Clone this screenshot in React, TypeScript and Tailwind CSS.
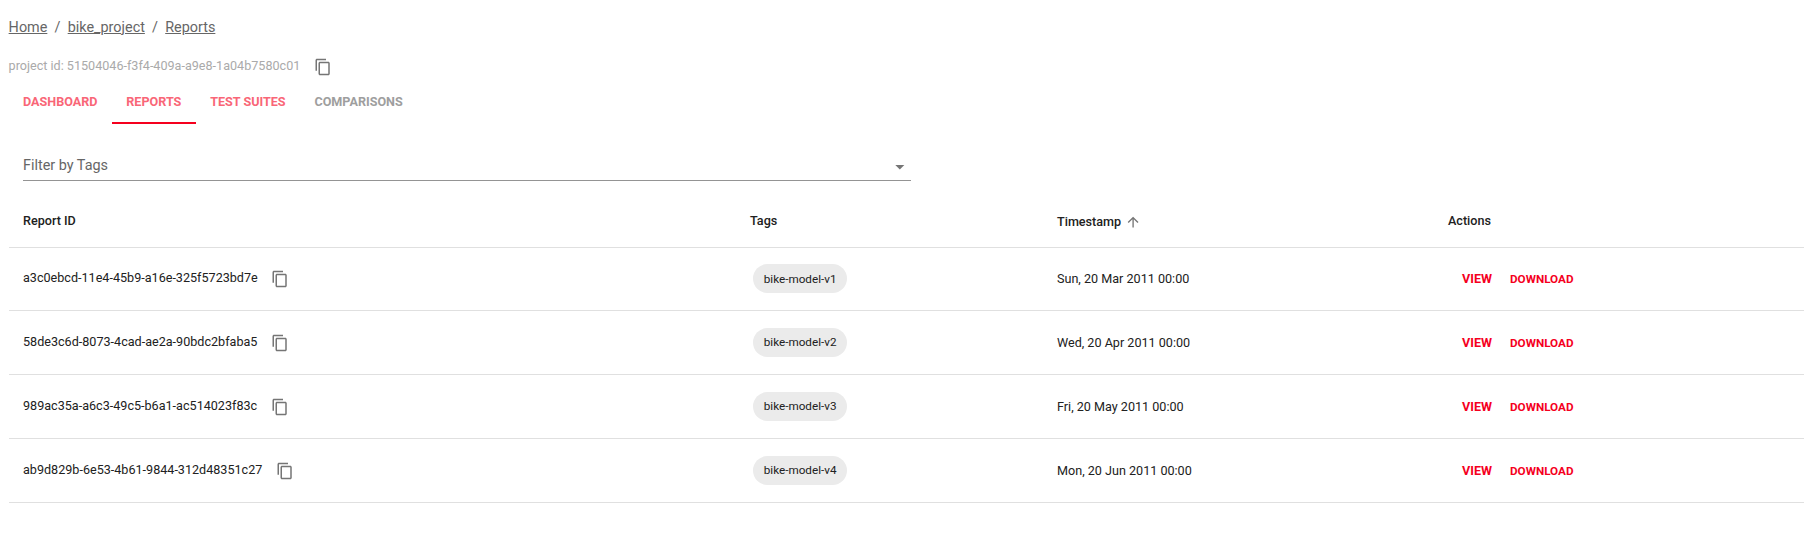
import React from "react";

type Report = { id: string; tag: string; timestamp: string };

const reports: Report[] = [
  { id: "a3c0ebcd-11e4-45b9-a16e-325f5723bd7e", tag: "bike-model-v1", timestamp: "Sun, 20 Mar 2011 00:00" },
  { id: "58de3c6d-8073-4cad-ae2a-90bdc2bfaba5", tag: "bike-model-v2", timestamp: "Wed, 20 Apr 2011 00:00" },
  { id: "989ac35a-a6c3-49c5-b6a1-ac514023f83c", tag: "bike-model-v3", timestamp: "Fri, 20 May 2011 00:00" },
  { id: "ab9d829b-6e53-4b61-9844-312d48351c27", tag: "bike-model-v4", timestamp: "Mon, 20 Jun 2011 00:00" },
];

const columns = "grid grid-cols-[727px_307px_391px_1fr] border-b border-[#e0e0e0]";

function CopyButton() {
  return (
    <button aria-label="Copy" className="flex shrink-0">
      <svg viewBox="0 0 24 24" className="size-[18px] fill-[#757575]">
        <path d="M16 1H4c-1.1 0-2 .9-2 2v14h2V3h12V1zm3 4H8c-1.1 0-2 .9-2 2v14c0 1.1.9 2 2 2h11c1.1 0 2-.9 2-2V7c0-1.1-.9-2-2-2zm0 16H8V7h11v14z" />
      </svg>
    </button>
  );
}

function Breadcrumbs() {
  return (
    <nav className="-ml-[0.4px] flex h-[53px] items-center gap-[7.2px] pt-[2px] text-[14.4px] text-[#666]">
      <a className="underline decoration-[#666]">Home</a>
      <span>/</span>
      <a className="underline decoration-[#666]">bike_project</a>
      <span>/</span>
      <a className="underline decoration-[#666]">Reports</a>
    </nav>
  );
}

function Tabs() {
  const tab = "flex items-center px-[14.4px] border-b-2";
  return (
    <div className="-ml-[0.4px] flex h-[43px] text-[12.6px] font-bold">
      <a className={`${tab} border-transparent text-[#f96677]`}>DASHBOARD</a>
      <a className={`${tab} border-[#f5001e] text-[#f96677]`}>REPORTS</a>
      <a className={`${tab} border-transparent text-[#f96677]`}>TEST SUITES</a>
      <a className={`${tab} border-transparent text-[#9e9e9e]`}>COMPARISONS</a>
    </div>
  );
}

function HeaderRow() {
  return (
    <div className={`${columns} mt-[13px] h-[54px] items-center font-medium`}>
      <div className="pl-[14px] pt-px">Report ID</div>
      <div className="pl-[14px] pt-px">Tags</div>
      <div className="flex items-center pl-[14px] pt-[3px]">
        Timestamp
        <svg viewBox="0 0 24 24" className="ml-1 size-[16.2px] fill-[#757575]">
          <path d="M4 12l1.41 1.41L11 7.83V20h2V7.83l5.58 5.59L20 12l-8-8-8 8z" />
        </svg>
      </div>
      <div className="pl-[14px] pt-px">Actions</div>
    </div>
  );
}

function ReportRow({ report }: { report: Report }) {
  return (
    <div className={`${columns} h-16 items-center first-of-type:h-[63px]`}>
      <div className="flex items-center gap-[13.6px] pl-[14px]">
        <span className="pb-[2px]">{report.id}</span>
        <CopyButton />
      </div>
      <div className="flex pb-px pl-[17px]">
        <span className="flex h-[29px] items-center rounded-full bg-[#ebebeb] px-[10.8px] text-[11.7px]">
          {report.tag}
        </span>
      </div>
      <div className="pl-[14px]">{report.timestamp}</div>
      <div className="flex items-center gap-[18px] pl-[28px] font-bold text-[#f5001e]">
        <a className="text-[12.6px]">VIEW</a>
        <a className="text-[11.7px]">DOWNLOAD</a>
      </div>
    </div>
  );
}

export default function App() {
  return (
    <main className="h-[560px] overflow-hidden bg-white pl-[9px] font-[Roboto,sans-serif] text-[12.6px] leading-[18px] text-[#212121]">
      <Breadcrumbs />
      <div className="-ml-[0.4px] flex h-[28px] items-center gap-[14px] pb-px text-[#aaa]">
        <span className="pb-[2px]">project id: 51504046-f3f4-409a-a9e8-1a04b7580c01</span>
        <CopyButton />
      </div>
      <Tabs />
      <div className="ml-[14px] mt-[26px] flex h-[31px] w-[888px] items-center justify-between border-b border-[#949494] pt-[2px] text-[14.4px] text-[#666]">
        <span>Filter by Tags</span>
        <svg viewBox="0 0 24 24" className="mt-px size-[21.6px] fill-[#757575]">
          <path d="M7 10l5 5 5-5z" />
        </svg>
      </div>
      <HeaderRow />
      <section>
        {reports.map((report) => (
          <ReportRow key={report.id} report={report} />
        ))}
      </section>
    </main>
  );
}
